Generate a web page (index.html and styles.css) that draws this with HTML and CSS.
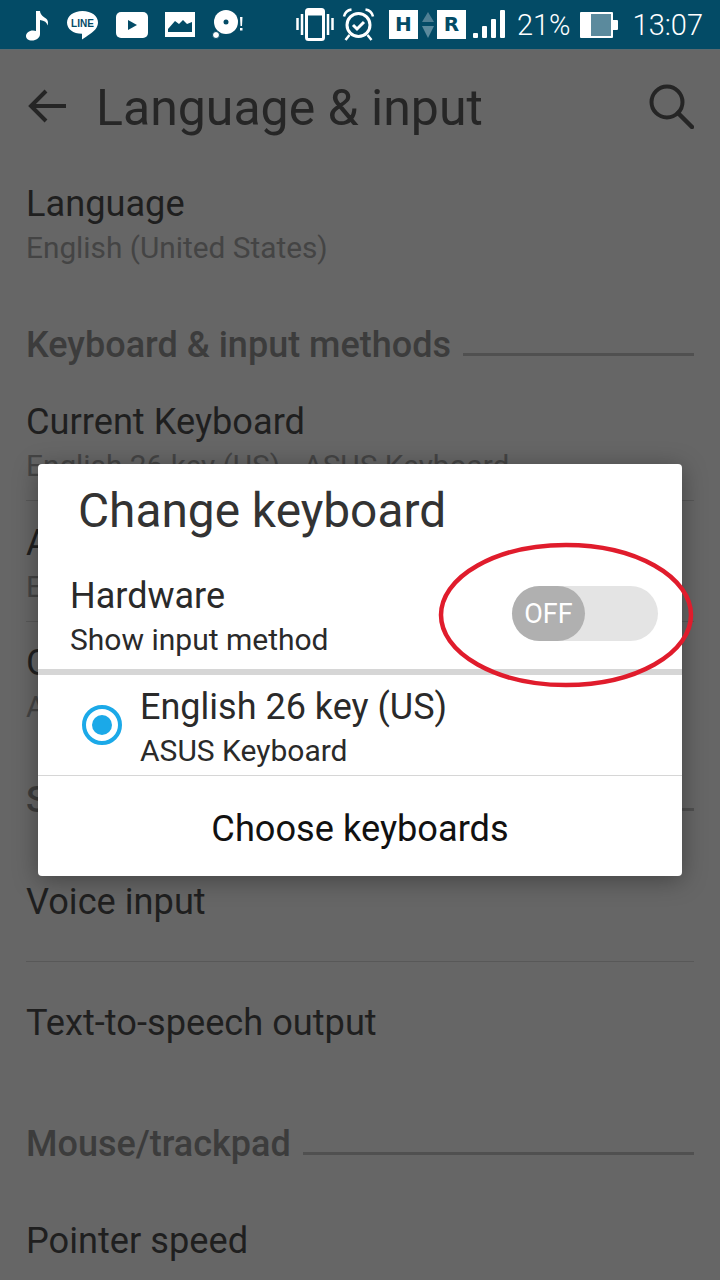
FILE: index.html
```html
<!DOCTYPE html>
<html lang="en">
<head>
  <meta charset="UTF-8">
  <title>Language &amp; input</title>
  <link rel="stylesheet" href="styles.css">
</head>
<body>

  <div class="statusbar">
    <div class="status-left">
      <svg width="24" height="32" viewBox="0 0 24 32"><path d="M11 2h4c.5 4 3 5.500 6 7.500 2 1.500 2.500 4 1.500 7-.5-3-3-5-7.500-5.500V25c0 4-4 6.500-8 6.500-4 0-6-2-6-4.500 0-3 3-5.500 7-5.500 1.200 0 2.200.2 3 .6z" fill="#fff"/></svg>
      <svg width="33" height="30" viewBox="0 0 33 30"><path d="M16.500 1C25.500 1 32 6 32 12.500c0 5-4 9-8 11.500-3 2-5.500 4-8 5.500v-5.700C7 23.800 1 19 1 12.500 1 6 7.500 1 16.500 1z" fill="#fff"/><text x="16.500" y="16.500" class="icon-line">LINE</text></svg>
      <svg width="32" height="26" viewBox="0 0 32 26"><rect width="32" height="26" rx="5" fill="#fff"/><path d="M12 8l9 5-9 5z" fill="#034b66"/></svg>
      <svg width="30" height="25" viewBox="0 0 30 25"><path d="M0 0h30v25H0z" fill="#fff"/><path d="M3 20v-3l7-8 4 3 4-4 4 4 5-2v10z" fill="#034b66"/></svg>
      <svg width="32" height="30" viewBox="0 0 32 30"><circle cx="14" cy="12" r="12" fill="#fff"/><circle cx="14" cy="12" r="2.500" fill="#034b66"/><circle cx="4" cy="25" r="3.500" fill="#fff" stroke="#034b66" stroke-width="1"/><path d="M28 7h2.500l-.5 9h-1.500zM28 18h2.500v2.500H28z" fill="#fff"/></svg>
    </div>
    <div class="status-right">
      <svg class="icon-vibrate" width="38" height="33" viewBox="0 0 38 33"><path d="M1.500 10v12M6 6v21M32 6v21M36.500 10v12" stroke="#fff" stroke-width="2.500" fill="none"/><rect x="10.500" y="1.500" width="17" height="30" rx="2" fill="none" stroke="#fff" stroke-width="3"/><rect x="10.500" y="1.500" width="17" height="6" fill="#fff"/></svg>
      <svg class="icon-alarm" width="33" height="33" viewBox="0 0 33 33"><circle cx="16.500" cy="17" r="11.500" fill="none" stroke="#fff" stroke-width="3"/><path d="M11 17l4 4 7-7" fill="none" stroke="#fff" stroke-width="3"/><path d="M2 8.500C3 4 6 2 9.500 1.500M31 8.500C30 4 27 2 23.500 1.500M7.500 27L3.500 32M25.500 27l4 5" fill="none" stroke="#fff" stroke-width="2.500"/></svg>
      <span class="sim">H</span>
      <svg class="icon-arrows" width="12" height="26" viewBox="0 0 12 26"><path d="M6 0l6 10H0z" fill="#4f7f93"/><path d="M0 14h12L6 26z" fill="#5b8a9d"/></svg>
      <span class="sim">R</span>
      <svg class="icon-signal" width="33" height="29" viewBox="0 0 33 29"><rect x="0" y="23" width="5" height="5" rx="1" fill="#fff"/><rect x="9" y="16" width="5" height="12" rx="1" fill="#fff"/><rect x="18" y="9" width="5" height="19" rx="1" fill="#fff"/><rect x="27" y="0" width="5" height="28" rx="1" fill="#fff"/></svg>
      <span class="status-text pct">21%</span>
      <svg class="icon-battery" width="38" height="26" viewBox="0 0 38 26"><rect width="33" height="26" rx="1" fill="#fff"/><rect x="11" y="2" width="20" height="22" fill="#5b8a9d"/><rect x="32" y="8" width="6" height="10" rx="1" fill="#fff"/></svg>
      <span class="status-text clock">13:07</span>
    </div>
  </div>

  <div class="toolbar">
    <svg class="back" width="40" height="36" viewBox="0 0 40 36"><path d="M38 18H4M18 3L3 18l15 15" fill="none" stroke="#252525" stroke-width="4"/></svg>
    <h1>Language &amp; input</h1>
    <svg class="search" width="46" height="46" viewBox="0 0 46 46"><circle cx="19" cy="19" r="15.500" fill="none" stroke="#252525" stroke-width="4"/><path d="M30 30l14 14" stroke="#252525" stroke-width="4.500" stroke-linecap="round"/></svg>
  </div>

  <div class="settings">
    <div class="row row-language">
      <div class="row-title">Language</div>
      <div class="row-sub">English (United States)</div>
    </div>
    <div class="section"><span>Keyboard &amp; input methods</span><i></i></div>
    <div class="row row-current row-line">
      <div class="row-title">Current Keyboard</div>
      <div class="row-sub">English 26 key (US) - ASUS Keyboard</div>
    </div>
    <div class="row row-asus row-line">
      <div class="row-title">ASUS Keyboard</div>
      <div class="row-sub">English 26 key (US)</div>
    </div>
    <div class="row row-google">
      <div class="row-title">Google voice typing</div>
      <div class="row-sub">Automatic</div>
    </div>
    <div class="section"><span>Speech</span><i></i></div>
    <div class="row row-voice row-line"><div class="row-title">Voice input</div></div>
    <div class="row row-tts"><div class="row-title">Text-to-speech output</div></div>
    <div class="section"><span>Mouse/trackpad</span><i></i></div>
    <div class="row row-pointer"><div class="row-title">Pointer speed</div></div>
  </div>

  <div class="dialog">
    <div class="dialog-title">Change keyboard</div>
    <div class="hardware">
      <div>
        <div class="hw-title">Hardware</div>
        <div class="hw-sub">Show input method</div>
      </div>
      <div class="toggle"><div class="knob">OFF</div></div>
    </div>
    <div class="ime">
      <div class="radio"><div class="radio-dot"></div></div>
      <div class="ime-text">
        <div class="hw-title">English 26 key (US)</div>
        <div class="hw-sub">ASUS Keyboard</div>
      </div>
    </div>
    <div class="choose">Choose keyboards</div>
  </div>

  <svg class="circle-mark" width="260" height="150" viewBox="0 0 260 150"><ellipse cx="130" cy="73" rx="125" ry="70" fill="none" stroke="#e01c2c" stroke-width="4.500"/></svg>

</body>
</html>
```

FILE: styles.css
```css
* {
  box-sizing: border-box;
}

body {
  margin: 0;
  width: 720px;
  height: 1280px;
  overflow: hidden;
  position: relative;
  background: #666;
  font-family: Roboto, sans-serif;
  color: #252525;
}

.statusbar {
  height: 50px;
  background: #034b66;
  border-bottom: 1px solid #5a6a70;
  display: flex;
  align-items: center;
  justify-content: space-between;
  padding: 0 17px 0 25px;
}

.status-left,
.status-right {
  display: flex;
  align-items: center;
}

.status-left {
  gap: 17px;
}

.icon-line {
  font: bold 10px "Liberation Sans", sans-serif;
  fill: #034b66;
  text-anchor: middle;
}

.icon-alarm {
  margin-left: 8px;
  margin-right: 14px;
}

.sim {
  width: 29px;
  height: 29px;
  background: #fff;
  color: #034b66;
  font: bold 20px "DejaVu Sans", sans-serif;
  text-align: center;
  line-height: 29px;
}

.icon-arrows {
  margin: 0 3px 0 4px;
}

.icon-signal {
  margin-left: 7px;
}

.status-text {
  color: #fff;
  font-size: 29px;
  font-weight: 300;
}

.pct {
  margin-left: 11px;
}

.icon-battery {
  margin-left: 9px;
}

.clock {
  margin-left: 15px;
}

.toolbar {
  height: 115px;
  display: flex;
  align-items: center;
  padding: 0 26px 4px 28px;
}

.toolbar h1 {
  margin: 4px 0 0 28px;
  flex: 1;
  font-size: 50px;
  font-weight: 400;
  color: #262626;
}

.settings {
  padding: 0 26px 0 26px;
}

.row-language {
  height: 150px;
  padding-top: 15px;
}

.row-current {
  height: 126px;
  padding-top: 23px;
}

.row-asus {
  height: 121px;
  padding-top: 18px;
}

.row-google {
  height: 148px;
  padding-top: 17px;
}

.row-voice {
  height: 132px;
  padding-top: 48px;
}

.row-tts {
  height: 152px;
  padding-top: 37px;
}

.row-pointer {
  height: 110px;
  padding-top: 43px;
}

.row-line {
  border-bottom: 1px solid #585858;
}

.row-title {
  font-size: 36.2px;
  line-height: 48px;
  color: #1f1f1f;
}

.row-sub {
  font-size: 29.8px;
  line-height: 40px;
  color: #444;
}

.section {
  height: 60px;
  display: flex;
  align-items: center;
  font-size: 36px;
  font-weight: 500;
  color: #3c3c3c;
}

.section span {
  white-space: nowrap;
}

.section i {
  flex: 1;
  height: 3px;
  margin: 18px 0 0 12px;
  background: #505050;
}

.dialog {
  position: absolute;
  left: 38px;
  top: 464px;
  width: 644px;
  height: 412px;
  background: #fff;
  border-radius: 4px;
  box-shadow: 0 4px 24px rgba(0, 0, 0, 0.35);
  display: flex;
  flex-direction: column;
}

.dialog-title {
  height: 90px;
  padding: 14px 0 0 40px;
  font-size: 47.8px;
  line-height: 66px;
  color: #333;
}

.hardware {
  height: 121px;
  border-bottom: 6px solid #d6d6d6;
  display: flex;
  justify-content: space-between;
  padding: 20px 24px 0 32px;
}

.hw-title {
  font-size: 36px;
  line-height: 44px;
  color: #2a2a2a;
}

.hw-sub {
  font-size: 30px;
  line-height: 44px;
  color: #2a2a2a;
}

.toggle {
  width: 146px;
  height: 55px;
  margin-top: 12px;
  background: #e4e4e4;
  border-radius: 28px;
}

.knob {
  width: 73px;
  height: 55px;
  background: #b0b0b0;
  border-radius: 28px;
  color: #fff;
  font-size: 27px;
  line-height: 57px;
  text-align: center;
}

.ime {
  height: 101px;
  border-bottom: 1px solid #d6d6d6;
  display: flex;
  align-items: center;
  padding-left: 44px;
  gap: 18px;
}

.ime-text {
  margin-top: 8px;
}

.radio {
  width: 40px;
  height: 40px;
  border: 4px solid #1ba9e8;
  border-radius: 50%;
  display: flex;
  align-items: center;
  justify-content: center;
}

.radio-dot {
  width: 20px;
  height: 20px;
  background: #1ba9e8;
  border-radius: 50%;
}

.choose {
  flex: 1;
  display: flex;
  align-items: center;
  justify-content: center;
  padding-top: 4px;
  font-size: 36.2px;
  color: #111;
}

.circle-mark {
  position: absolute;
  left: 436px;
  top: 542px;
}
```
